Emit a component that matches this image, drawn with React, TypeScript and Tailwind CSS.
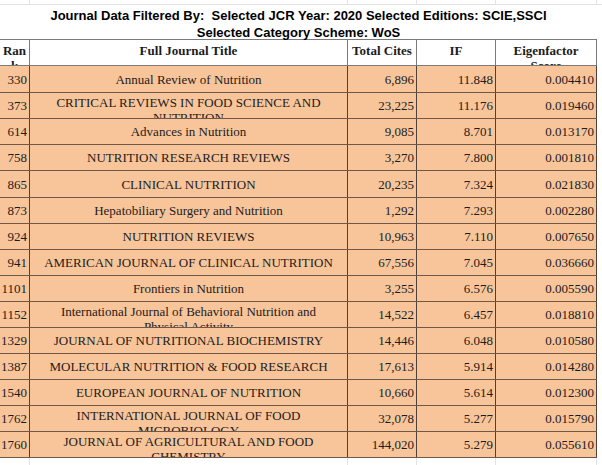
import React from "react";

type Row = {
  rank: string;
  title: string[];
  cites: string;
  jif: string;
  eigen: string;
};

const rows: Row[] = [
  { rank: "330", title: ["Annual Review of Nutrition"], cites: "6,896", jif: "11.848", eigen: "0.004410" },
  { rank: "373", title: ["CRITICAL REVIEWS IN FOOD SCIENCE AND", "NUTRITION"], cites: "23,225", jif: "11.176", eigen: "0.019460" },
  { rank: "614", title: ["Advances in Nutrition"], cites: "9,085", jif: "8.701", eigen: "0.013170" },
  { rank: "758", title: ["NUTRITION RESEARCH REVIEWS"], cites: "3,270", jif: "7.800", eigen: "0.001810" },
  { rank: "865", title: ["CLINICAL NUTRITION"], cites: "20,235", jif: "7.324", eigen: "0.021830" },
  { rank: "873", title: ["Hepatobiliary Surgery and Nutrition"], cites: "1,292", jif: "7.293", eigen: "0.002280" },
  { rank: "924", title: ["NUTRITION REVIEWS"], cites: "10,963", jif: "7.110", eigen: "0.007650" },
  { rank: "941", title: ["AMERICAN JOURNAL OF CLINICAL NUTRITION"], cites: "67,556", jif: "7.045", eigen: "0.036660" },
  { rank: "1101", title: ["Frontiers in Nutrition"], cites: "3,255", jif: "6.576", eigen: "0.005590" },
  { rank: "1152", title: ["International Journal of Behavioral Nutrition and", "Physical Activity"], cites: "14,522", jif: "6.457", eigen: "0.018810" },
  { rank: "1329", title: ["JOURNAL OF NUTRITIONAL BIOCHEMISTRY"], cites: "14,446", jif: "6.048", eigen: "0.010580" },
  { rank: "1387", title: ["MOLECULAR NUTRITION & FOOD RESEARCH"], cites: "17,613", jif: "5.914", eigen: "0.014280" },
  { rank: "1540", title: ["EUROPEAN JOURNAL OF NUTRITION"], cites: "10,660", jif: "5.614", eigen: "0.012300" },
  { rank: "1762", title: ["INTERNATIONAL JOURNAL OF FOOD", "MICROBIOLOGY"], cites: "32,078", jif: "5.277", eigen: "0.015790" },
  { rank: "1760", title: ["JOURNAL OF AGRICULTURAL AND FOOD", "CHEMISTRY"], cites: "144,020", jif: "5.279", eigen: "0.055610" },
];

const cols = "grid grid-cols-[30px_318px_69px_79px_101px]";
const numCell = "flex items-center justify-end pr-[2px] border-r border-[#4f4038] overflow-hidden";

export default function App() {
  return (
    <div className="w-[602px] h-[465px] bg-white overflow-hidden text-[#1c1c1c]">
      {/* faint sheet row above the title */}
      <div className={`${cols} h-[5px] border-b border-[#e3e3e3]`}>
        <div className="border-r border-[#e3e3e3]" />
        <div className="border-r border-[#e3e3e3]" />
        <div className="border-r border-[#e3e3e3]" />
        <div className="border-r border-[#e3e3e3]" />
        <div className="border-r border-[#e3e3e3]" />
      </div>

      {/* title block */}
      <div className="w-[597px] h-[34px] flex flex-col items-center pt-[2px] font-['Liberation_Sans',Arial,sans-serif] font-bold text-[13px] leading-[17px] text-black whitespace-pre">
        <div>Journal Data Filtered By:  Selected JCR Year: 2020 Selected Editions: SCIE,SSCI</div>
        <div>Selected Category Scheme: WoS</div>
      </div>

      <div className="w-[597px] font-['Liberation_Serif','Times_New_Roman',serif] text-[13px]">
        {/* header */}
        <div className={`${cols} h-[27px] border-t border-b border-[#7a7a7a] bg-white font-bold leading-[15px] text-center`}>
          <div className="pt-[3px] border-r border-[#7a7a7a] overflow-hidden break-all">Rank</div>
          <div className="pt-[3px] border-r border-[#7a7a7a] overflow-hidden">Full Journal Title</div>
          <div className="pt-[3px] border-r border-[#7a7a7a] overflow-hidden">Total Cites</div>
          <div className="pt-[3px] border-r border-[#7a7a7a] overflow-hidden">IF</div>
          <div className="pt-[3px] border-r border-[#7a7a7a] overflow-hidden">
            Eigenfactor
            <br />
            Score
          </div>
        </div>

        {rows.map((r, i) => (
          <div
            key={r.rank}
            className={`${cols} ${i === 0 || i === 4 ? "h-[27px]" : "h-[26px]"} bg-[#f8c49a] border-b border-[#6f5847] leading-[15px]`}
          >
            <div className={numCell}>{r.rank}</div>
            <div
              className={`flex flex-col border-r border-[#4f4038] overflow-hidden text-center ${
                r.title.length > 1 ? "justify-start pt-[2px]" : "justify-center"
              }`}
            >
              {r.title.map((line) => (
                <div key={line} className="whitespace-nowrap">
                  {line}
                </div>
              ))}
            </div>
            <div className={numCell}>{r.cites}</div>
            <div className={numCell}>{r.jif}</div>
            <div className={numCell}>{r.eigen}</div>
          </div>
        ))}

        {/* faint sheet gridlines below the table */}
        <div className={`${cols} h-[12px]`}>
          <div className="border-r border-[#e3e3e3]" />
          <div className="border-r border-[#e3e3e3]" />
          <div className="border-r border-[#e3e3e3]" />
          <div className="border-r border-[#e3e3e3]" />
          <div className="border-r border-[#e3e3e3]" />
        </div>
      </div>
    </div>
  );
}
